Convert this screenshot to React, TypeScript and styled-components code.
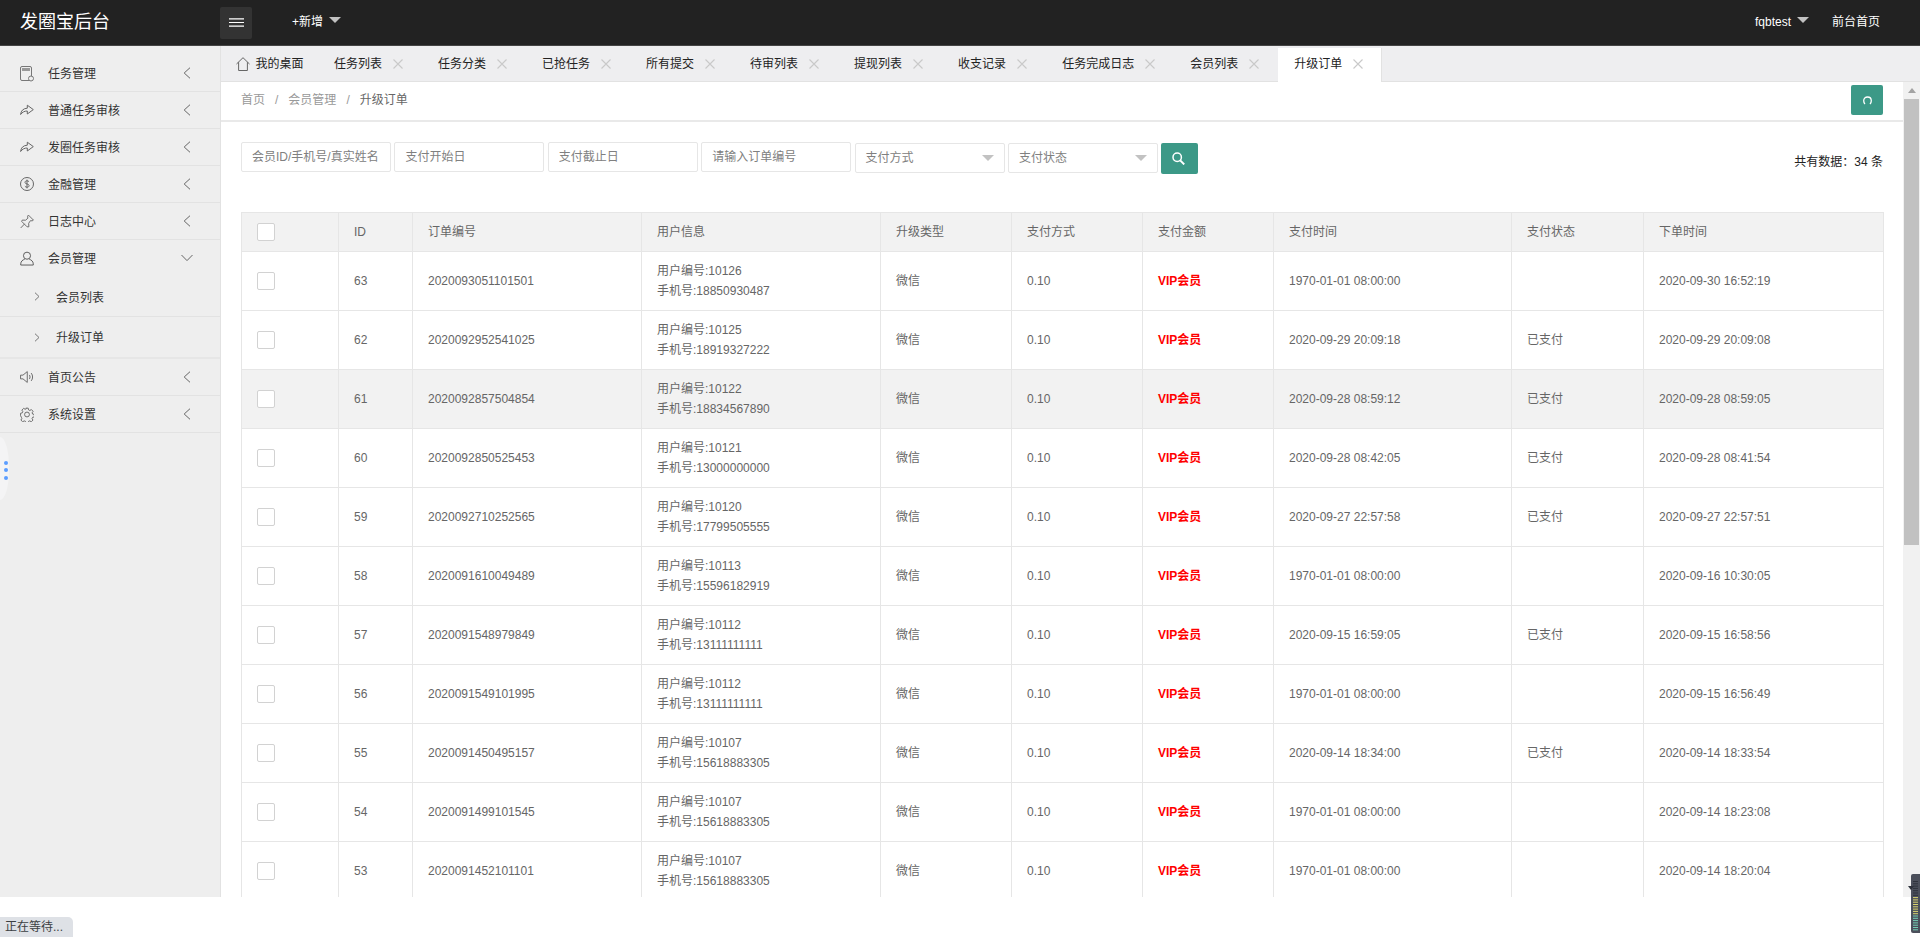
import React from "react";
import styled, { createGlobalStyle } from "styled-components";

const Global = createGlobalStyle`
  html, body { margin: 0; padding: 0; height: 100%; overflow: hidden; background: #fff; }
  body { font: 12px/1.5 "Liberation Sans", "Noto Sans CJK SC", sans-serif; color: #666; }
  * { box-sizing: border-box; }
`;

const Page = styled.div`position: relative; height: 937px; width: 1920px; overflow: hidden; background: #fff;`;

const TopBar = styled.header`
  display: flex; align-items: center; height: 46px; background: #222; border-bottom: 1px solid #444; color: #fff;
`;
const Logo = styled.div`width: 220px; padding-left: 20px; font-size: 18px; line-height: 45px; color: #fff;`;
const MenuButton = styled.button`
  width: 32px; height: 32px; padding: 0; border: 0; border-radius: 2px; background: #333; display: flex; align-items: center; justify-content: center;
`;
const NavItem = styled.div<{ $ml?: number; $mr?: number }>`
  display: flex; align-items: center; gap: 6px; margin-left: ${p => p.$ml ?? 0}px; margin-right: ${p => p.$mr ?? 0}px; color: #fff; line-height: 18px; position: relative; top: -1px;
`;
const Spacer = styled.div`flex: 1;`;
const Caret = styled.i<{ $raised?: boolean }>`
  display: block; width: 0; height: 0;
  border-left: 6px solid transparent; border-right: 6px solid transparent;
  border-top: 6px solid #c2c2c2;
  ${p => (p.$raised ? "margin-top: -3px;" : "")}
`;

const Body = styled.div`display: flex; height: 851px;`;

const Sidebar = styled.aside`
  position: relative; width: 221px; flex: none; background: #eee; border-right: 1px solid #e2e2e2; padding-top: 9px;
`;
const MenuRow = styled.div<{ $open?: boolean }>`
  display: flex; align-items: center; height: 37px; padding: 0 ${p => (p.$open ? 27 : 29)}px 0 20px; color: #333;
  border-bottom: 1px solid ${p => (p.$open ? "transparent" : "#e2e2e2")};
`;
const MenuIcon = styled.span`width: 14px; height: 14px; margin-right: 14px; display: flex; color: #555;`;
const MenuLabel = styled.span`flex: 1; color: #333; padding-top: 2px;`;
const SubRow = styled.div<{ $last?: boolean }>`
  display: flex; align-items: center; height: ${p => (p.$last ? 42 : 40)}px; padding-left: 34px; color: #333;
  border-bottom: ${p => (p.$last ? 2 : 1)}px solid ${p => (p.$last ? "#e6e6e6" : "#e2e2e2")};
`;
const SubLabel = styled.span`padding-top: 2px;`;
const SubChevron = styled.span`width: 6px; margin-right: 16px; display: flex;`;
const DragHandle = styled.div`
  position: absolute; left: 0; top: 391px; width: 9px; height: 63px; border-radius: 0 9px 9px 0 / 0 30px 30px 0; background: #f4f4f5;
  display: flex; flex-direction: column; align-items: center; justify-content: center; gap: 3.5px; padding: 3px 0 0 3px;
`;
const Dot = styled.i`display: block; width: 4px; height: 4px; border-radius: 50%; background: #5c9dff;`;

const Main = styled.main`flex: 1; min-width: 0; display: flex; flex-direction: column;`;
const TabBar = styled.nav`
  display: flex; height: 36px; background: #eeeef0; border-bottom: 1px solid #e2e2e2; padding-top: 2px;
`;
const Tab = styled.div<{ $active?: boolean; $home?: boolean }>`
  display: flex; align-items: center; height: 34px; padding: 0 ${p => (p.$home ? 14.5 : 19)}px 3px ${p => (p.$home ? 14.5 : 16)}px;
  color: #222; background: ${p => (p.$active ? "#fff" : "transparent")};
  ${p => (p.$active ? "border-right: 1px solid #e2e2e2; padding-right: 18px;" : "")}
`;
const TabClose = styled.span`display: flex; margin-left: 11px;`;
const HomeIcon = styled.span`display: flex; margin-right: 6px; color: #666;`;

const Workspace = styled.div`flex: 1; min-height: 0; display: flex;`;
const Content = styled.div`flex: 1; min-width: 0; display: flex; flex-direction: column; overflow: hidden;`;
const Crumbs = styled.div`
  display: flex; align-items: center; height: 40px; flex: none; border-bottom: 2px solid #e9e9e9; padding: 0 20px 2px; position: relative;
`;
const Crumb = styled.span<{ $current?: boolean }>`color: ${p => (p.$current ? "#666" : "#999")};`;
const Sep = styled.span`margin: 0 10px; color: #999;`;
const RefreshButton = styled.button`
  position: absolute; right: 20px; top: 3px; width: 32px; height: 30px; border: 0; padding: 0; border-radius: 2px; background: #3c9987;
  display: flex; align-items: center; justify-content: center;
`;
const Tools = styled.div`display: flex; justify-content: space-between; flex: none; padding: 20px 20px 0; height: 90px;`;
const Filters = styled.div`display: flex; gap: 3.4px; align-items: flex-start;`;
const TextInput = styled.input`
  width: 150px; height: 30px; padding: 0 10px; border: 1px solid #e6e6e6; border-radius: 2px; background: #fff; outline: 0; font: inherit; color: #666;
  &::placeholder { color: #808080; opacity: 1; }
`;
const SelectBox = styled.div`
  width: 150px; height: 30px; margin-top: 1px; padding: 0 10px; border: 1px solid #e6e6e6; border-radius: 2px; background: #fff; color: #808080;
  display: flex; align-items: center; justify-content: space-between;
`;
const SearchButton = styled.button`
  width: 37px; height: 31px; margin-top: 1px; border: 0; padding: 0 3px 0 0; border-radius: 2px; background: #3c9987; display: flex; align-items: center; justify-content: center;
`;
const Total = styled.div`margin-top: 12px; color: #222; line-height: 16px;`;

const TableWrap = styled.div`padding: 0 20px; flex: 1; min-height: 0; overflow: hidden;`;
const Grid = styled.table`
  width: 1642px; table-layout: fixed; border-collapse: collapse; border: 1px solid #e6e6e6; color: #666;
  th, td { border: 1px solid #e6e6e6; padding: 9px 15px; text-align: left; line-height: 20px; font-weight: 400; font-size: 12px; }
  thead th { background: #f2f2f2; height: 39px; }
`;
const Row = styled.tr<{ $hover?: boolean }>`
  background: ${p => (p.$hover ? "#f2f2f2" : "#fff")};
  height: 59px;
`;
const Check = styled.i`display: block; width: 18px; height: 18px; border: 1px solid #d2d2d2; border-radius: 2px; background: #fff;`;
const Vip = styled.span`color: #f00; font-weight: 700;`;
const Line = styled.div``;

const ScrollTrack = styled.div`
  width: 17px; flex: none; background: #f1f1f1; display: flex; flex-direction: column; align-items: center;
`;
const ScrollArrow = styled.i`
  display: block; margin: 6px 0 6px; width: 0; height: 0; border-left: 4px solid transparent; border-right: 4px solid transparent; border-bottom: 5px solid #a3a3a3;
`;
const ScrollThumb = styled.div`width: 15px; height: 446px; background: #c1c1c1;`;

const StatusBubble = styled.div`
  position: absolute; left: 0; bottom: 0; width: 73px; height: 20px; padding-left: 5px; background: #dee1e6; border-radius: 0 5px 0 0; color: #3c4043; line-height: 20px;
`;
const MeterWidget = styled.svg`position: absolute; right: 0; bottom: 4px;`;

const Chevron = ({ dir }: { dir: "left" | "down" | "right" }) => {
  if (dir === "down")
    return <svg width="12" height="8" viewBox="0 0 12 8" fill="none" stroke="#666" strokeWidth="1"><path d="M.5 1 6 6.6 11.5 1" /></svg>;
  if (dir === "right")
    return <svg width="6" height="9" viewBox="0 0 6 9" fill="none" stroke="#777" strokeWidth="1"><path d="M1 .7 5 4.5 1 8.3" /></svg>;
  return <svg width="8" height="12" viewBox="0 0 8 12" fill="none" stroke="#666" strokeWidth="1"><path d="M7 .7 1.2 6 7 11.3" /></svg>;
};

const icons: Record<string, React.ReactNode> = {
  task: (
    <svg width="14" height="16" viewBox="0 0 14 16" fill="none" stroke="#777" strokeWidth="1">
      <rect x=".5" y=".5" width="11" height="14" rx="1.5" />
      <rect x="2" y="2" width="8" height="3" fill="#999" stroke="none" />
      <circle cx="11" cy="12.5" r="2.5" fill="#eee" />
    </svg>
  ),
  share: (
    <svg width="14" height="14" viewBox="0 0 14 14" fill="none" stroke="#666" strokeWidth="1" strokeLinejoin="round">
      <path d="M.6 11.5C1 7.5 3.4 5.4 7.3 5.2V2.2L13.3 6.6 7.3 11V8C4.6 8 2.4 9 .6 11.5Z" />
    </svg>
  ),
  money: (
    <svg width="14" height="14" viewBox="0 0 14 14" fill="none" stroke="#666" strokeWidth="1">
      <circle cx="7" cy="7" r="6.5" />
      <path d="M9 4.8C8.6 4 7.8 3.8 7 3.8c-1.2 0-2 .6-2 1.6 0 2.2 4.1 1 4.1 3.2 0 1-.9 1.6-2.1 1.6-.9 0-1.7-.3-2.1-1.1M7 2.6v8.8" />
    </svg>
  ),
  pin: (
    <svg width="15" height="15" viewBox="0 0 15 15" fill="none" stroke="#666" strokeWidth="1" strokeLinejoin="round">
      <path d="M9 .6 14.4 6 13 6.8 11.2 6.6 9.3 9.4 9.5 13.2 7.6 13.2 1.8 7.4 2.4 6 6 6.1 8.4 4 8.2 1.8Z" />
      <path d="M5 10 .8 14.4" />
    </svg>
  ),
  user: (
    <svg width="15" height="15" viewBox="0 0 15 15" fill="none" stroke="#555" strokeWidth="1">
      <circle cx="7.5" cy="4.5" r="3.8" />
      <path d="M.8 14.5v-1.3c0-2.6 2.2-4.4 4.2-4.8M14.2 14.5v-1.3c0-2.6-2.2-4.4-4.2-4.8M.8 14.5h13.4" />
    </svg>
  ),
  sound: (
    <svg width="15" height="14" viewBox="0 0 15 14" fill="none" stroke="#666" strokeWidth="1" strokeLinejoin="round">
      <path d="M.6 5v4h2.6l4.6 3.8V1.2L3.2 5Z" />
      <path d="M10 4.8c1 1.3 1 3.1 0 4.4M12 2.8c2 2.5 2 5.9 0 8.4" />
    </svg>
  ),
  gear: (
    <svg width="15" height="15" viewBox="0 0 15 15" fill="none" stroke="#666" strokeWidth="1" strokeLinejoin="round">
      <path d="M6.2.7h2.6l.4 1.9 1.3.6 1.7-1 1.8 1.9-1 1.6.5 1.3 1.9.5v2.6l-1.9.4-.6 1.3 1 1.7-1.8 1.8-1.7-1-1.2.5-.5 1.9H6.2l-.4-1.9-1.3-.5-1.6 1-1.9-1.8 1-1.7-.5-1.3L.6 8.8V6.2l1.9-.5.5-1.3-1-1.6 1.9-1.9 1.6 1 1.3-.6Z" />
      <circle cx="7.5" cy="7.5" r="2.6" />
    </svg>
  ),
};

const CloseX = () => (
  <svg width="10" height="10" viewBox="0 0 10 10" stroke="#c9c9c9" strokeWidth="1.1"><path d="M.5.5l9 9M9.5.5l-9 9" /></svg>
);

type Order = { id: number; no: string; uid: number; tel: string; paid: string; state: string; at: string };
const EPOCH = "1970-01-01 08:00:00";
const orders: Order[] = [
  { id: 63, no: "2020093051101501", uid: 10126, tel: "18850930487", paid: EPOCH, state: "", at: "2020-09-30 16:52:19" },
  { id: 62, no: "2020092952541025", uid: 10125, tel: "18919327222", paid: "2020-09-29 20:09:18", state: "已支付", at: "2020-09-29 20:09:08" },
  { id: 61, no: "2020092857504854", uid: 10122, tel: "18834567890", paid: "2020-09-28 08:59:12", state: "已支付", at: "2020-09-28 08:59:05" },
  { id: 60, no: "2020092850525453", uid: 10121, tel: "13000000000", paid: "2020-09-28 08:42:05", state: "已支付", at: "2020-09-28 08:41:54" },
  { id: 59, no: "2020092710252565", uid: 10120, tel: "17799505555", paid: "2020-09-27 22:57:58", state: "已支付", at: "2020-09-27 22:57:51" },
  { id: 58, no: "2020091610049489", uid: 10113, tel: "15596182919", paid: EPOCH, state: "", at: "2020-09-16 10:30:05" },
  { id: 57, no: "2020091548979849", uid: 10112, tel: "13111111111", paid: "2020-09-15 16:59:05", state: "已支付", at: "2020-09-15 16:58:56" },
  { id: 56, no: "2020091549101995", uid: 10112, tel: "13111111111", paid: EPOCH, state: "", at: "2020-09-15 16:56:49" },
  { id: 55, no: "2020091450495157", uid: 10107, tel: "15618883305", paid: "2020-09-14 18:34:00", state: "已支付", at: "2020-09-14 18:33:54" },
  { id: 54, no: "2020091499101545", uid: 10107, tel: "15618883305", paid: EPOCH, state: "", at: "2020-09-14 18:23:08" },
  { id: 53, no: "2020091452101101", uid: 10107, tel: "15618883305", paid: EPOCH, state: "", at: "2020-09-14 18:20:04" },
];

const menuTop = [
  { icon: "task", label: "任务管理" },
  { icon: "share", label: "普通任务审核" },
  { icon: "share", label: "发圈任务审核" },
  { icon: "money", label: "金融管理" },
  { icon: "pin", label: "日志中心" },
];
const menuBottom = [
  { icon: "sound", label: "首页公告" },
  { icon: "gear", label: "系统设置" },
];
const tabs = ["任务列表", "任务分类", "已抢任务", "所有提交", "待审列表", "提现列表", "收支记录", "任务完成日志", "会员列表", "升级订单"];
const widths = [97, 74, 229, 239, 131, 131, 131, 238, 132, 240];
const heads = ["ID", "订单编号", "用户信息", "升级类型", "支付方式", "支付金额", "支付时间", "支付状态", "下单时间"];

const meterColor = (i: number) => (i < 7 ? "#2e323c" : i < 15 ? "#d9d36f" : "#74cdb4");

export default function App() {
  return (
    <Page>
      <Global />
      <TopBar>
        <Logo>发圈宝后台</Logo>
        <MenuButton aria-label="menu">
          <svg width="15" height="9" viewBox="0 0 15 9" stroke="#fff" strokeWidth="1.2"><path d="M0 .8h15M0 4.5h15M0 8.2h15" /></svg>
        </MenuButton>
        <NavItem $ml={40}>+新增<Caret $raised /></NavItem>
        <Spacer />
        <NavItem>fqbtest<Caret $raised /></NavItem>
        <NavItem $ml={23} $mr={40}>前台首页</NavItem>
      </TopBar>
      <Body>
        <Sidebar>
          {menuTop.map(m => (
            <MenuRow key={m.label}>
              <MenuIcon>{icons[m.icon]}</MenuIcon>
              <MenuLabel>{m.label}</MenuLabel>
              <Chevron dir="left" />
            </MenuRow>
          ))}
          <MenuRow $open>
            <MenuIcon>{icons.user}</MenuIcon>
            <MenuLabel>会员管理</MenuLabel>
            <Chevron dir="down" />
          </MenuRow>
          <SubRow><SubChevron><Chevron dir="right" /></SubChevron><SubLabel>会员列表</SubLabel></SubRow>
          <SubRow $last><SubChevron><Chevron dir="right" /></SubChevron><SubLabel>升级订单</SubLabel></SubRow>
          {menuBottom.map(m => (
            <MenuRow key={m.label}>
              <MenuIcon>{icons[m.icon]}</MenuIcon>
              <MenuLabel>{m.label}</MenuLabel>
              <Chevron dir="left" />
            </MenuRow>
          ))}
          <DragHandle><Dot /><Dot /><Dot /></DragHandle>
        </Sidebar>
        <Main>
          <TabBar>
            <Tab $home>
              <HomeIcon>
                <svg width="14" height="14" viewBox="0 0 14 14" fill="none" stroke="#666" strokeWidth="1" strokeLinejoin="round">
                  <path d="M.5 7 7 .7 13.5 7M2.6 5.2v8.3h8.8V5.2" />
                </svg>
              </HomeIcon>
              我的桌面
            </Tab>
            {tabs.map((t, i) => (
              <Tab key={t} $active={i === tabs.length - 1}>
                {t}
                <TabClose><CloseX /></TabClose>
              </Tab>
            ))}
          </TabBar>
          <Workspace>
            <Content>
              <Crumbs>
                <Crumb>首页</Crumb><Sep>/</Sep>
                <Crumb>会员管理</Crumb><Sep>/</Sep>
                <Crumb $current>升级订单</Crumb>
                <RefreshButton aria-label="refresh">
                  <svg width="9" height="9" viewBox="0 0 9 9" fill="none" stroke="#fff" strokeWidth="1.3"><path d="M2 8C.9 7 .7 5.8.7 4.8.7 2.6 2.4 1 4.5 1s3.8 1.6 3.8 3.8c0 1-.3 2.2-1.3 3.2" /></svg>
                </RefreshButton>
              </Crumbs>
              <Tools>
                <Filters>
                  <TextInput placeholder="会员ID/手机号/真实姓名" />
                  <TextInput placeholder="支付开始日" />
                  <TextInput placeholder="支付截止日" />
                  <TextInput placeholder="请输入订单编号" />
                  <SelectBox>支付方式<Caret /></SelectBox>
                  <SelectBox>支付状态<Caret /></SelectBox>
                  <SearchButton aria-label="search">
                    <svg width="13" height="13" viewBox="0 0 13 13" fill="none" stroke="#fff">
                      <circle cx="5.2" cy="5.2" r="4.2" strokeWidth="1.5" />
                      <path d="M8.2 8.4 12.2 12.4" strokeWidth="2" />
                    </svg>
                  </SearchButton>
                </Filters>
                <Total>共有数据：34 条</Total>
              </Tools>
              <TableWrap>
                <Grid>
                  <colgroup>
                    {widths.map((w, i) => <col key={i} width={w} />)}
                  </colgroup>
                  <thead>
                    <tr>
                      <th><Check /></th>
                      {heads.map(h => <th key={h}>{h}</th>)}
                    </tr>
                  </thead>
                  <tbody>
                    {orders.map(o => (
                      <Row key={o.id} $hover={o.id === 61}>
                        <td><Check /></td>
                        <td>{o.id}</td>
                        <td>{o.no}</td>
                        <td>
                          <Line>用户编号:{o.uid}</Line>
                          <Line>手机号:{o.tel}</Line>
                        </td>
                        <td>微信</td>
                        <td>0.10</td>
                        <td><Vip>VIP会员</Vip></td>
                        <td>{o.paid}</td>
                        <td>{o.state}</td>
                        <td>{o.at}</td>
                      </Row>
                    ))}
                  </tbody>
                </Grid>
              </TableWrap>
            </Content>
            <ScrollTrack>
              <ScrollArrow />
              <ScrollThumb />
            </ScrollTrack>
          </Workspace>
        </Main>
      </Body>
      <StatusBubble>正在等待...</StatusBubble>
      <MeterWidget width="12" height="59" viewBox="0 0 12 59">
        <path d="M12 0H5a2 2 0 0 0-2 2v55a2 2 0 0 0 2 2h7Z" fill="#4b4f5b" />
        <path d="M0 12h6l-3 4Z" fill="#2e323c" />
        {Array.from({ length: 22 }, (_, i) => (
          <rect key={i} x="5" y={7 + i * 2.3} width="5" height="1" fill={meterColor(i)} />
        ))}
      </MeterWidget>
    </Page>
  );
}
